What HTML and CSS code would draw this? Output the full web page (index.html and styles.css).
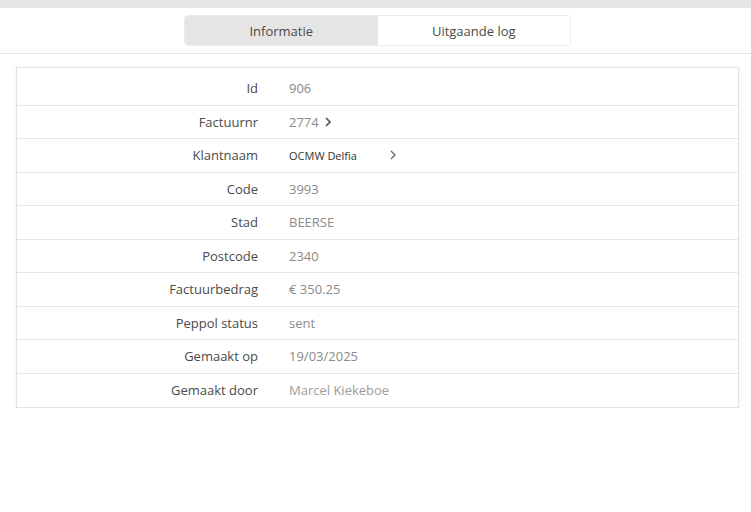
FILE: index.html
```html
<!DOCTYPE html>
<html lang="nl">
<head>
<meta charset="utf-8">
<title>Informatie</title>
<link rel="stylesheet" href="styles.css">
</head>
<body>
<div class="topbar"></div>
<header class="header">
  <div class="tabs">
    <div class="tab active">Informatie</div>
    <div class="tab">Uitgaande log</div>
  </div>
</header>
<main class="content">
  <section class="card">
    <div class="row"><div class="label">Id</div><div class="value">906</div></div>
    <div class="row"><div class="label">Factuurnr</div><div class="value">2774<svg class="chev" width="8" height="12" viewBox="0 0 8 12"><path d="M2 2 L6 6 L2 10" fill="none" stroke="#555" stroke-width="1.7"/></svg></div></div>
    <div class="row"><div class="label">Klantnaam</div><div class="value"><span class="link">OCMW Delfia</span><svg class="chev" width="8" height="12" viewBox="0 0 8 12"><path d="M2 2 L6 6 L2 10" fill="none" stroke="#666" stroke-width="1.3"/></svg></div></div>
    <div class="row"><div class="label">Code</div><div class="value">3993</div></div>
    <div class="row"><div class="label">Stad</div><div class="value">BEERSE</div></div>
    <div class="row"><div class="label">Postcode</div><div class="value">2340</div></div>
    <div class="row"><div class="label">Factuurbedrag</div><div class="value">€ 350.25</div></div>
    <div class="row"><div class="label">Peppol status</div><div class="value">sent</div></div>
    <div class="row"><div class="label">Gemaakt op</div><div class="value">19/03/2025</div></div>
    <div class="row"><div class="label">Gemaakt door</div><div class="value light">Marcel Kiekeboe</div></div>
  </section>
</main>
</body>
</html>
```

FILE: styles.css
```css
html, body {
  margin: 0;
  padding: 0;
  background: #fff;
  font-family: "Open Sans", "Noto Sans", sans-serif;
  font-size: 13px;
}
.topbar {
  height: 8px;
  background: #e6e6e6;
}
.header {
  height: 46px;
  border-bottom: 1px solid #e3e3e3;
  display: flex;
  justify-content: center;
  padding-top: 7px;
  box-sizing: border-box;
  padding-left: 4px;
}
.tabs {
  display: flex;
  width: 387px;
  height: 31px;
  border: 1px solid #ebebeb;
  border-radius: 4px;
  overflow: hidden;
  box-sizing: border-box;
}
.tab {
  flex: 1;
  display: flex;
  align-items: center;
  justify-content: center;
  color: #4a4a4a;
  font-size: 13px;
  background: #fff;
}
.tab.active {
  background: #e5e5e5;
}
.content {
  padding: 13px 12px 0 16px;
}
.card {
  border: 1px solid #e2e2e2;
  box-shadow: 0 1px 3px rgba(0,0,0,0.08);
  padding-top: 4px;
  background: #fff;
}
.row {
  display: grid;
  grid-template-columns: 241px 1fr;
  height: 33.5px;
  align-items: center;
  border-bottom: 1px solid #e6e6e6;
  box-sizing: border-box;
}
.row:last-child {
  border-bottom: none;
}
.label {
  text-align: right;
  color: #4a4a4a;
}
.value {
  padding-left: 31px;
  color: #8a8a8a;
  display: flex;
  align-items: center;
}
.value.light {
  color: #9c9c9c;
}
.chev {
  margin-left: 5px;
}
.link {
  font-size: 11px;
  color: #333;
  width: 95px;
}
```
